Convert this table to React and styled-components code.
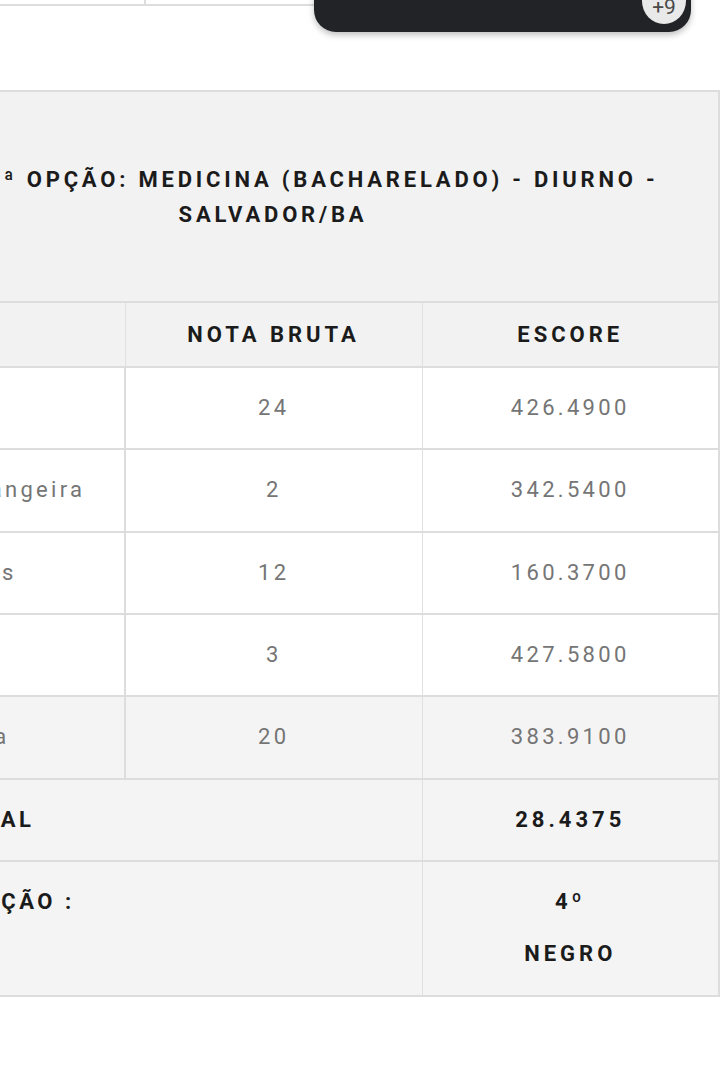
import styled, { createGlobalStyle } from "styled-components";

const GlobalStyle = createGlobalStyle`
  html, body {
    margin: 0;
    padding: 0;
    background: #ffffff;
    font-family: Roboto, "Noto Sans", sans-serif;
    overflow: hidden;
  }
`;

const rows = [
  { area: "Português", bruta: "24", escore: "426.4900" },
  { area: "Língua Estrangeira", bruta: "2", escore: "342.5400" },
  { area: "Humanidades", bruta: "12", escore: "160.3700" },
  { area: "Redação", bruta: "3", escore: "427.5800" },
  { area: "Antropologia", bruta: "20", escore: "383.9100", shaded: true }
];

export default function App() {
  return (
    <>
      <GlobalStyle />
      <Page>
        <PrevTable>
          <PrevCell $first />
          <PrevCell />
        </PrevTable>

        <FloatingBar>
          <MoreBadge>+9</MoreBadge>
        </FloatingBar>

        <ScoreTable>
          <colgroup>
            <col style={{ width: 298 }} />
            <col style={{ width: 297 }} />
            <col style={{ width: 297 }} />
          </colgroup>
          <thead>
            <tr>
              <TitleCell colSpan={3}>
                CURSO 1ª OPÇÃO: MEDICINA (BACHARELADO) - DIURNO - SALVADOR/BA
              </TitleCell>
            </tr>
            <tr>
              <HeadCell />
              <HeadCell>NOTA BRUTA</HeadCell>
              <HeadCell>ESCORE</HeadCell>
            </tr>
          </thead>
          <tbody>
            {rows.map(r => (
              <Row key={r.area} $shaded={r.shaded}>
                <AreaCell>{r.area}</AreaCell>
                <ValueCell>{r.bruta}</ValueCell>
                <ValueCell>{r.escore}</ValueCell>
              </Row>
            ))}
            <Row $shaded>
              <LabelCell colSpan={2}>ESCORE FINAL</LabelCell>
              <StrongCell>28.4375</StrongCell>
            </Row>
            <Row $shaded>
              <LabelCell colSpan={2} $top>CLASSIFICAÇÃO :</LabelCell>
              <StrongCell>
                4º
                <br />
                NEGRO
              </StrongCell>
            </Row>
          </tbody>
        </ScoreTable>
      </Page>
    </>
  );
}

const Page = styled.div`
  position: relative;
  width: 720px;
  height: 1083px;
`;

const PrevTable = styled.div`
  display: flex;
  height: 6px;
  width: 616px;
  border-bottom: 2px solid #dddddd;
  box-sizing: border-box;
`;

const PrevCell = styled.div`
  width: ${p => (p.$first ? "316px" : "300px")};
  margin-left: ${p => (p.$first ? "-172px" : "0")};
  flex-shrink: 0;
  border-right: 2px solid #dddddd;
`;

const FloatingBar = styled.div`
  position: absolute;
  top: -40px;
  left: 314px;
  width: 377px;
  height: 72px;
  background: #222326;
  border-radius: 0 0 22px 22px;
  box-shadow: 0 3px 6px rgba(0, 0, 0, 0.25);
  z-index: 2;
`;

const MoreBadge = styled.div`
  position: absolute;
  right: 5px;
  bottom: 8px;
  width: 44px;
  height: 46px;
  border-radius: 50%;
  background: #e9e9e9;
  color: #4a4a4a;
  font-size: 21px;
  display: flex;
  align-items: center;
  justify-content: center;
  padding-top: 12px;
  box-sizing: border-box;
`;

const ScoreTable = styled.table`
  margin: 84px 0 0 -174px;
  width: 894px;
  border-collapse: collapse;
  table-layout: fixed;
  border: 2px solid #dddddd;
  font-size: 22px;
`;

const TitleCell = styled.th`
  background: #f2f2f2;
  padding: 70px 40px 69px;
  font-size: 22px;
  font-weight: 700;
  line-height: 35px;
  letter-spacing: 3.8px;
  color: #1b1b1b;
  text-align: center;
  border-bottom: 2px solid #dddddd;
`;

const HeadCell = styled.th`
  background: #f2f2f2;
  padding: 14px;
  line-height: 35px;
  font-weight: 700;
  letter-spacing: 4px;
  color: #1b1b1b;
  text-align: center;
  border-right: 1px solid #e0e0e0;
  border-bottom: 2px solid #dddddd;
`;

const Row = styled.tr`
  background: ${p => (p.$shaded ? "#f4f4f4" : "#ffffff")};
  border-bottom: 2px solid #dddddd;
`;

const AreaCell = styled.td`
  padding: 14px 14px 14px 16px;
  line-height: 52.33px;
  color: #757575;
  letter-spacing: 3.3px;
  border-right: 2px solid #dddddd;
  white-space: nowrap;
`;

const ValueCell = styled.td`
  padding: 14px;
  line-height: 52.33px;
  color: #757575;
  letter-spacing: 3.3px;
  text-align: center;
  border-right: 1px solid #e0e0e0;
`;

const LabelCell = styled.td`
  padding: 14px 14px 14px 16px;
  line-height: 52.33px;
  color: #1b1b1b;
  font-weight: 700;
  letter-spacing: 3.5px;
  white-space: nowrap;
  vertical-align: ${p => (p.$top ? "top" : "middle")};
  border-right: 1px solid #e0e0e0;
`;

const StrongCell = styled.td`
  padding: 14px;
  line-height: 52.33px;
  color: #1b1b1b;
  font-weight: 700;
  letter-spacing: 4px;
  text-align: center;
`;
